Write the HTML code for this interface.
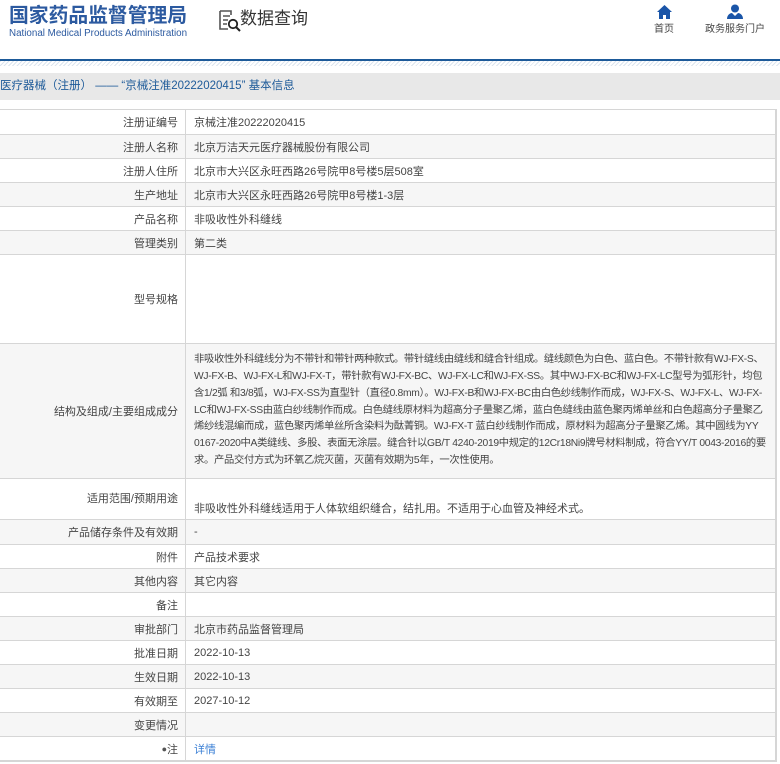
<!DOCTYPE html>
<html><head><meta charset="utf-8"><style>
body{margin:0;width:780px;height:764px;background:#fff;font-family:"Liberation Sans","Noto Sans CJK SC",sans-serif;position:relative;overflow:hidden}
.a{position:absolute;line-height:1.15;white-space:nowrap}
.row{position:absolute;left:0;width:777px;border-top:1px solid #d6d6d6;box-sizing:border-box;border-right:2px solid #d6d6d6}
.row.g{background:#f6f6f6}
.lb{position:absolute;left:0;width:186px;top:0;bottom:0;border-right:1px solid #d6d6d6;display:flex;align-items:center;justify-content:flex-end;padding-right:7px;box-sizing:border-box;font-size:11px;color:#444}
.vl{position:absolute;left:194px;right:6px;top:0;bottom:0;display:flex;align-items:center;font-size:11px;color:#444}
</style></head><body>
<div class="a" style="left:9px;top:5px;font-size:19.8px;font-weight:bold;color:#2c5aa0">国家药品监督管理局</div>
<div class="a" style="left:9px;top:28px;font-size:9.8px;color:#2c5aa0">National Medical Products Administration</div>
<svg class="a" style="left:218px;top:10px" width="24" height="22" viewBox="0 0 24 22"><path d="M2 1h11v4M2 1v18h8M5 6h7M5 10h5M5 14h4" fill="none" stroke="#555" stroke-width="1.6"/><circle cx="15" cy="14" r="4.2" fill="none" stroke="#222" stroke-width="1.8"/><path d="M18 17l4 4" stroke="#222" stroke-width="2"/></svg>
<div class="a" style="left:240px;top:9px;font-size:17px;color:#333">数据查询</div>
<svg class="a" style="left:657px;top:5px" width="15" height="14" viewBox="0 0 15 14"><path d="M7.5 0L0 7h2v7h4v-4h3v4h4V7h2z" fill="#1a55a8"/></svg>
<div class="a" style="left:654px;top:24px;font-size:10px;color:#444">首页</div>
<svg class="a" style="left:727px;top:4px" width="16" height="15" viewBox="0 0 16 15"><circle cx="8" cy="4.5" r="4" fill="#1a55a8"/><path d="M0 15c0-4 3-6 5-6l3 3 3-3c2 0 5 2 5 6z" fill="#1a55a8"/></svg>
<div class="a" style="left:705px;top:24px;font-size:10px;color:#444">政务服务门户</div>
<div class="a" style="left:0;top:59px;width:780px;height:2px;background:#1d5a99"></div>
<div class="a" style="left:0;top:61px;width:780px;height:5px;background:repeating-linear-gradient(135deg,#dbe4ee 0 1px,#fff 1px 3px)"></div>
<div class="a" style="left:0;top:73px;width:780px;height:27px;background:#e8e8e8"></div>
<div class="a" style="left:0;top:80px;font-size:11.5px;color:#1d5a99">医疗器械（注册）&nbsp;——&nbsp;“京械注准20222020415”&nbsp;基本信息</div>

<div class="row" style="top:109px;height:25px"><div class="lb">注册证编号</div><div class="vl">京械注准20222020415</div></div>
<div class="row g" style="top:134px;height:24px"><div class="lb">注册人名称</div><div class="vl">北京万洁天元医疗器械股份有限公司</div></div>
<div class="row" style="top:158px;height:24px"><div class="lb">注册人住所</div><div class="vl">北京市大兴区永旺西路26号院甲8号楼5层508室</div></div>
<div class="row g" style="top:182px;height:24px"><div class="lb">生产地址</div><div class="vl">北京市大兴区永旺西路26号院甲8号楼1-3层</div></div>
<div class="row" style="top:206px;height:24px"><div class="lb">产品名称</div><div class="vl">非吸收性外科缝线</div></div>
<div class="row g" style="top:230px;height:24px"><div class="lb">管理类别</div><div class="vl">第二类</div></div>
<div class="row" style="top:254px;height:89px"><div class="lb">型号规格</div><div class="vl"></div></div>
<div class="row g" style="top:343px;height:135px"><div class="lb">结构及组成/主要组成成分</div><div class="vl" style="line-height:16.8px;font-size:10.3px;letter-spacing:-0.3px">非吸收性外科缝线分为不带针和带针两种款式。带针缝线由缝线和缝合针组成。缝线颜色为白色、蓝白色。不带针款有WJ-FX-S、WJ-FX-B、WJ-FX-L和WJ-FX-T，带针款有WJ-FX-BC、WJ-FX-LC和WJ-FX-SS。其中WJ-FX-BC和WJ-FX-LC型号为弧形针，均包含1/2弧 和3/8弧，WJ-FX-SS为直型针（直径0.8mm）。WJ-FX-B和WJ-FX-BC由白色纱线制作而成，WJ-FX-S、WJ-FX-L、WJ-FX-LC和WJ-FX-SS由蓝白纱线制作而成。白色缝线原材料为超高分子量聚乙烯，蓝白色缝线由蓝色聚丙烯单丝和白色超高分子量聚乙烯纱线混编而成，蓝色聚丙烯单丝所含染料为酞菁铜。WJ-FX-T 蓝白纱线制作而成，原材料为超高分子量聚乙烯。其中圆线为YY 0167-2020中A类缝线、多股、表面无涂层。缝合针以GB/T 4240-2019中规定的12Cr18Ni9牌号材料制成，符合YY/T 0043-2016的要求。产品交付方式为环氧乙烷灭菌，灭菌有效期为5年，一次性使用。</div></div>
<div class="row" style="top:478px;height:41px"><div class="lb" style="padding-bottom:2px">适用范围/预期用途</div><div class="vl" style="padding-top:18px">非吸收性外科缝线适用于人体软组织缝合，结扎用。不适用于心血管及神经术式。</div></div>
<div class="row g" style="top:519px;height:25px"><div class="lb">产品储存条件及有效期</div><div class="vl">-</div></div>
<div class="row" style="top:544px;height:24px"><div class="lb">附件</div><div class="vl">产品技术要求</div></div>
<div class="row g" style="top:568px;height:24px"><div class="lb">其他内容</div><div class="vl">其它内容</div></div>
<div class="row" style="top:592px;height:24px"><div class="lb">备注</div><div class="vl"></div></div>
<div class="row g" style="top:616px;height:24px"><div class="lb">审批部门</div><div class="vl">北京市药品监督管理局</div></div>
<div class="row" style="top:640px;height:24px"><div class="lb">批准日期</div><div class="vl">2022-10-13</div></div>
<div class="row g" style="top:664px;height:24px"><div class="lb">生效日期</div><div class="vl">2022-10-13</div></div>
<div class="row" style="top:688px;height:24px"><div class="lb">有效期至</div><div class="vl">2027-10-12</div></div>
<div class="row g" style="top:712px;height:24px"><div class="lb">变更情况</div><div class="vl"></div></div>
<div class="row" style="top:736px;height:26px;border-bottom:2px solid #d6d6d6"><div class="lb"><span style="font-size:9px;color:#555">●</span>注</div><div class="vl" style="color:#3a7fd5">详情</div></div>
</body></html>
